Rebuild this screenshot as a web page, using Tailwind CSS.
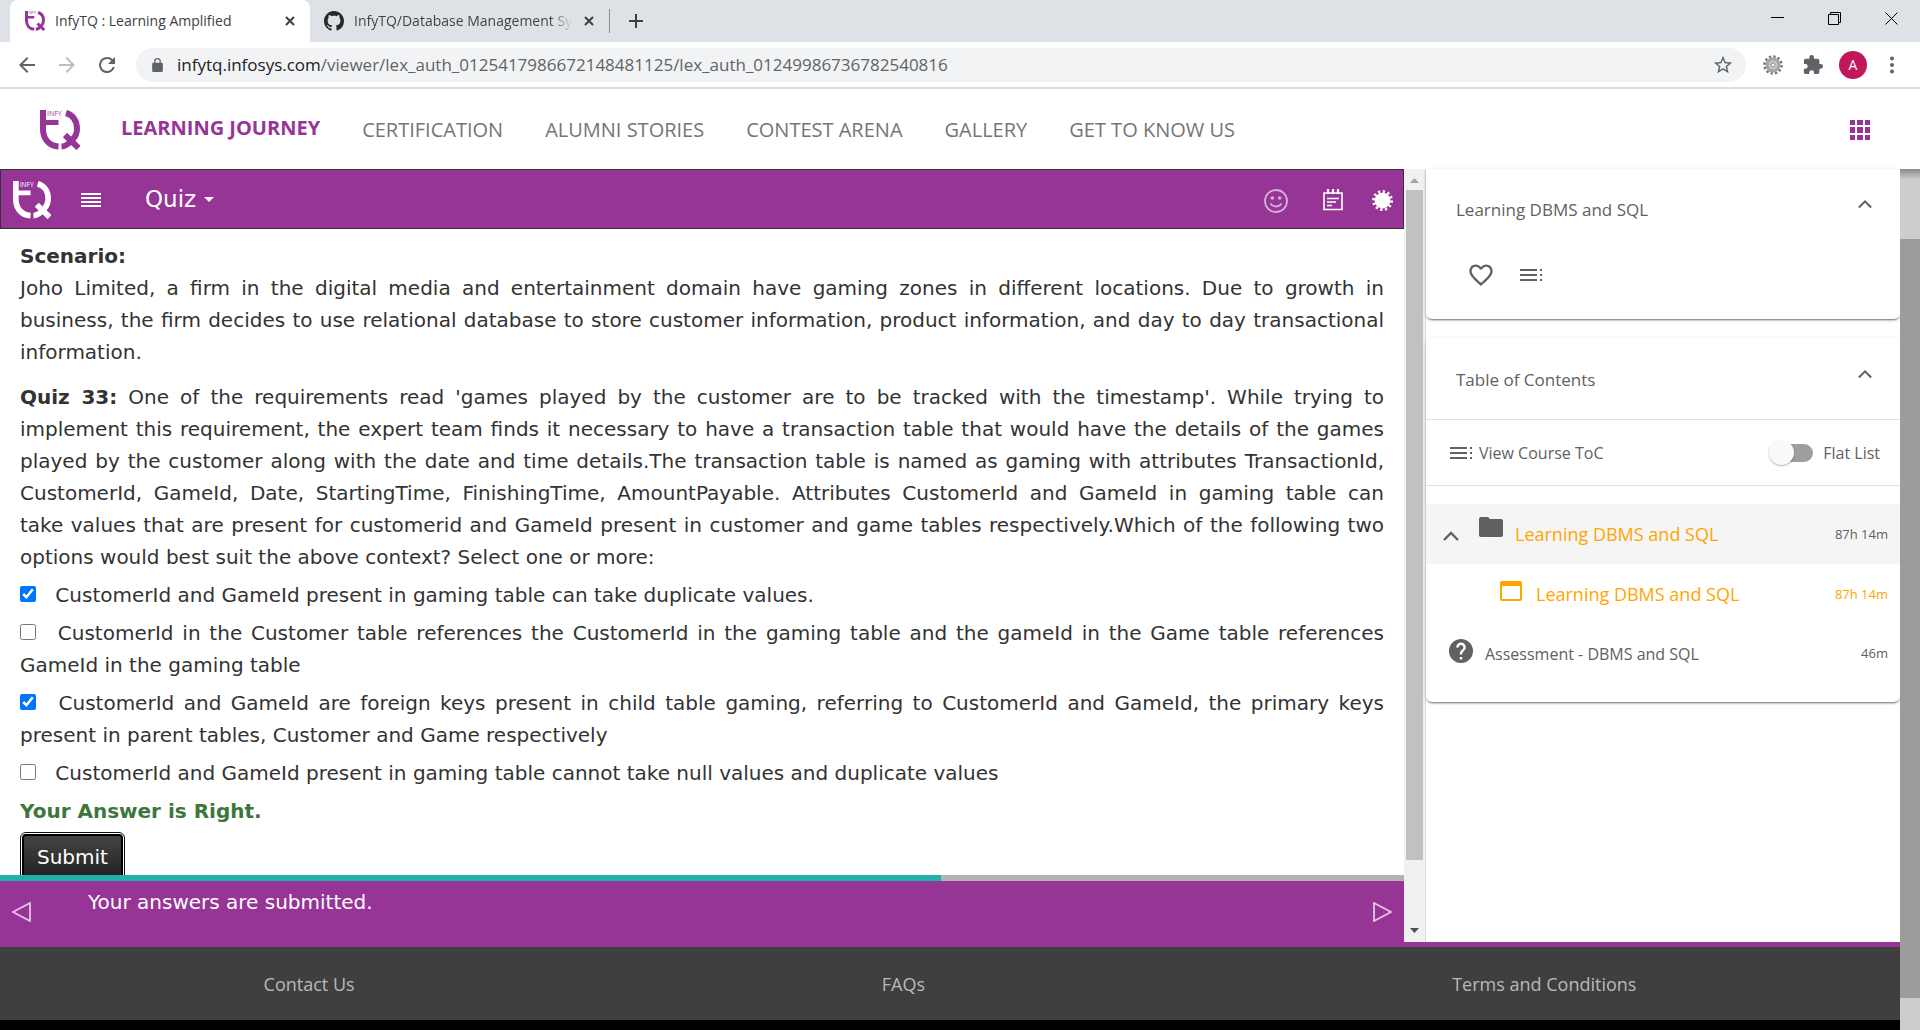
<!DOCTYPE html>
<html lang="en">
<head>
<meta charset="utf-8">
<title>InfyTQ : Learning Amplified</title>
<script src="https://cdn.jsdelivr.net/npm/@tailwindcss/browser@4"></script>
</head>
<body class="flex h-screen flex-col overflow-hidden bg-white font-['Open_Sans',sans-serif] text-[#616161]">
<svg class="hidden" aria-hidden="true">
  <symbol id="logo" viewBox="0 0 40 40">
    <g fill="none" stroke="currentColor" stroke-width="6">
      <path d="M3 0V19C3 29 9 36 18.500 36.500"/>
      <path stroke-width="5" d="M2 12.500H18.500"/>
      <path d="M26 3C33 5 37 11 37 18.500C37 23 36 26 33 29C29 34 26 36.300 21.500 36.500"/>
      <path d="M25 25L38.500 38"/>
    </g>
    <text x="7" y="6" font-size="7" fill="currentColor" font-family="Open Sans">INFY</text>
  </symbol>
  <symbol id="toc" viewBox="0 0 22 12"><path fill="currentColor" d="M0 0h17v2H0zM0 5h17v2H0zM0 10h17v2H0zM20 0h2v2h-2zM20 5h2v2h-2zM20 10h2v2h-2z"/></symbol>
  <symbol id="up" viewBox="0 0 16 10"><path fill="none" stroke="currentColor" stroke-width="2.4" d="M1 9l7-7 7 7"/></symbol>
  <symbol id="x" viewBox="0 0 10 10"><path stroke="currentColor" stroke-width="2" d="M1 1l8 8M9 1l-8 8"/></symbol>
</svg>

<!-- Browser tabs -->
<div class="flex h-[42px] shrink-0 items-stretch bg-[#dee1e6] pl-[10px] text-sm text-[#3c4043]">
  <div class="flex w-[300px] items-center rounded-t-lg bg-white pl-[15px] pr-[15px]">
    <svg class="size-5 text-[#963596]"><use href="#logo"/></svg>
    <span class="ml-[10px] flex-1 whitespace-nowrap">InfyTQ : Learning Amplified</span>
    <button aria-label="Close tab"><svg class="block size-[10px]"><use href="#x"/></svg></button>
  </div>
  <div class="flex w-[299px] items-center pl-[14px] pr-[15px]">
    <svg class="size-5 shrink-0" viewBox="0 0 16 16" fill="#24292e"><path d="M8 0C3.580 0 0 3.580 0 8c0 3.540 2.290 6.530 5.470 7.590.4.070.550-.170.550-.380 0-.190-.010-.820-.010-1.490-2.010.370-2.530-.490-2.690-.940-.090-.230-.480-.940-.820-1.130-.280-.150-.680-.520-.010-.530.630-.010 1.080.580 1.230.820.720 1.210 1.870.870 2.330.660.070-.520.280-.870.510-1.070-1.780-.200-3.640-.890-3.640-3.950 0-.870.310-1.590.820-2.150-.080-.200-.360-1.020.080-2.120 0 0 .670-.210 2.200.820.640-.180 1.320-.270 2-.270s1.360.090 2 .270c1.530-1.040 2.200-.820 2.200-.820.440 1.100.160 1.920.080 2.120.510.560.820 1.270.820 2.150 0 3.070-1.870 3.750-3.650 3.950.290.250.540.730.540 1.480 0 1.070-.010 1.930-.010 2.200 0 .210.150.460.550.380A8.010 8.010 0 0 0 16 8c0-4.420-3.580-8-8-8z"/></svg>
    <span class="ml-[10px] whitespace-nowrap bg-linear-to-r from-[#3c4043] from-90% to-transparent bg-clip-text text-transparent">InfyTQ/Database Management Sy</span>
    <button aria-label="Close tab" class="ml-auto"><svg class="block size-[10px]"><use href="#x"/></svg></button>
  </div>
  <div class="h-6 w-px self-center bg-[#8b8f94]"></div>
  <button aria-label="New tab" class="ml-[19px]"><svg class="size-[14px]" viewBox="0 0 14 14"><path stroke="currentColor" stroke-width="2" d="M7 0v14M0 7h14"/></svg></button>
  <div class="ml-auto flex items-center gap-11 pr-[22px] pb-[5px] text-black">
    <button aria-label="Minimize"><svg class="block size-[13px]" viewBox="0 0 13 13"><path stroke="currentColor" d="M0 5.500h13"/></svg></button>
    <button aria-label="Restore"><svg class="block size-[13px]" viewBox="0 0 13 13" fill="none" stroke="currentColor"><path d="M.5 2.500h10v10H.5zM2.500 2V.5h10v10H11"/></svg></button>
    <button aria-label="Close"><svg class="block size-[13px]" viewBox="0 0 13 13"><path stroke="currentColor" d="M.5.5l12 12M12.500.5l-12 12"/></svg></button>
  </div>
</div>

<!-- Address bar -->
<div class="flex h-[47px] shrink-0 items-center border-b-2 border-[#dadce0] pl-[15px] pr-4 text-[#5f6368]">
  <button aria-label="Back"><svg class="size-6" viewBox="0 0 24 24" fill="currentColor"><path d="M20 11H7.830l5.590-5.590L12 4l-8 8 8 8 1.410-1.410L7.830 13H20z"/></svg></button>
  <button aria-label="Forward" class="ml-4 text-[#bcbec1]"><svg class="size-6" viewBox="0 0 24 24" fill="currentColor"><path d="M12 4l-1.410 1.410L16.170 11H4v2h12.170l-5.580 5.590L12 20l8-8z"/></svg></button>
  <button aria-label="Reload" class="ml-4"><svg class="size-6" viewBox="0 0 24 24" fill="currentColor"><path d="M17.650 6.350A7.960 7.960 0 0 0 12 4a8 8 0 1 0 7.730 10h-2.080A6 6 0 1 1 12 6c1.660 0 3.140.690 4.220 1.780L13 11h7V4z"/></svg></button>
  <div class="ml-[17px] flex h-[34px] flex-1 items-center rounded-full bg-[#f1f3f4] pl-[14px] pr-3">
    <svg class="h-[14px] w-[15px]" viewBox="4 1 16 21" fill="currentColor"><path d="M18 8h-1V6A5 5 0 0 0 7 6v2H6a2 2 0 0 0-2 2v10c0 1.100.9 2 2 2h12a2 2 0 0 0 2-2V10a2 2 0 0 0-2-2zM8.900 6a3.100 3.100 0 0 1 6.200 0v2H8.900z"/></svg>
    <span class="ml-3 flex-1 whitespace-nowrap text-[17px]"><span class="text-[#202124]">infytq.infosys.com</span>/viewer/lex_auth_0125417986672148481125/lex_auth_01249986736782540816</span>
    <button aria-label="Bookmark"><svg class="block size-[22px]" viewBox="0 0 24 24" fill="currentColor"><path d="M22 9.240l-7.190-.620L12 2 9.190 8.630 2 9.240l5.460 4.730L5.820 21 12 17.270 18.180 21l-1.630-7.030zM12 15.400l-3.760 2.270 1-4.280-3.320-2.880 4.380-.380L12 6.100l1.710 4.040 4.380.380-3.320 2.880 1 4.280z"/></svg></button>
  </div>
  <svg class="ml-[17px] size-5" viewBox="0 0 20 20"><circle cx="10" cy="10" r="8.500" fill="none" stroke="#777" stroke-width="2.500" stroke-dasharray="2.400 2.050"/><circle cx="10" cy="10" r="6" fill="#c9c9c9" stroke="#a5a5a5" stroke-width="3"/><circle cx="10" cy="10" r="2" fill="#fff" stroke="#888"/></svg>
  <svg class="ml-5 size-5" viewBox="1 1 22 22" fill="currentColor"><path d="M20.500 11H19V7a2 2 0 0 0-2-2h-4V3.500a2.500 2.500 0 0 0-5 0V5H4a2 2 0 0 0-2 2v3.800h1.500a2.700 2.700 0 0 1 0 5.400H2V20c0 1.100.9 2 2 2h3.800v-1.500a2.700 2.700 0 0 1 5.400 0V22H17a2 2 0 0 0 2-2v-4h1.500a2.500 2.500 0 0 0 0-5z"/></svg>
  <span class="ml-4 flex size-7 items-center justify-center rounded-full bg-[#c2185b] text-sm text-white">A</span>
  <button aria-label="Menu" class="ml-[13px]"><svg class="size-6" viewBox="0 0 24 24" fill="currentColor"><circle cx="12" cy="5.500" r="2"/><circle cx="12" cy="12" r="2"/><circle cx="12" cy="18.500" r="2"/></svg></button>
</div>

<!-- Site header -->
<header class="flex h-20 shrink-0 items-center pl-10 pr-[50px] pt-[2px]">
  <svg class="size-10 text-[#963596]"><use href="#logo"/></svg>
  <nav class="ml-[41px] flex items-center gap-[42px] whitespace-nowrap text-xl text-[#757575]">
    <a href="#" class="pb-1 font-bold text-[#963596]">LEARNING JOURNEY</a>
    <a href="#">CERTIFICATION</a>
    <a href="#">ALUMNI STORIES</a>
    <a href="#">CONTEST ARENA</a>
    <a href="#">GALLERY</a>
    <a href="#">GET TO KNOW US</a>
  </nav>
  <button aria-label="Apps" class="ml-auto text-[#963596]"><svg class="block size-5" viewBox="0 0 20 20" fill="currentColor"><path d="M0 0h5v5H0zM7 0h6v5H7zM15 0h5v5h-5zM0 7h5v6H0zM7 7h6v6H7zM15 7h5v6h-5zM0 15h5v5H0zM7 15h6v5H7zM15 15h5v5h-5z"/></svg></button>
</header>

<div class="flex min-h-0 flex-1">
  <div class="flex min-w-0 flex-1 flex-col">
    <div class="flex min-h-0 flex-1">

      <!-- Quiz viewer -->
      <main class="flex min-w-0 flex-1 flex-col font-['Verdana','DejaVu_Sans',sans-serif] text-xl leading-8 text-[#333]">
        <div class="flex h-[60px] shrink-0 items-center border border-[#333] bg-[#963596] pl-3 pr-[10px] pt-[2px] text-white">
          <svg class="size-[38px]"><use href="#logo"/></svg>
          <button aria-label="Contents" class="ml-[30px]"><svg class="block h-[14px] w-5" viewBox="0 0 20 14"><path stroke="#fff" stroke-width="2" d="M0 1h20M0 5h20M0 9h20M0 13h20"/></svg></button>
          <button class="ml-11 flex items-center gap-2 pb-[2px] text-[23px]">Quiz <svg class="h-[5px] w-[10px]" viewBox="0 0 10 5"><path fill="#fff" d="M0 0h10L5 5z"/></svg></button>
          <button aria-label="Feedback" class="ml-auto pt-[2px] opacity-60"><svg class="block size-6" viewBox="0 0 24 24" fill="none" stroke="#fff" stroke-width="1.800"><circle cx="12" cy="12" r="11"/><path d="M6.500 14.500c2.500 4 8.500 4 11 0"/><circle cx="8.300" cy="9" r=".9" fill="#fff"/><circle cx="15.700" cy="9" r=".9" fill="#fff"/></svg></button>
          <button aria-label="Notes" class="ml-[34px]"><svg class="block size-[22px]" viewBox="0 0 22 22" fill="none" stroke="#fff"><path stroke-width="1.600" d="M2 4h18v16.500H2z"/><path stroke-width="2.200" d="M6 0v5M11 0v5M16 0v5"/><path stroke-width="1.300" d="M5 9.500h12M5 13h9M5 16.500h5"/></svg></button>
          <button aria-label="Settings" class="ml-7"><svg class="block size-[21px]" viewBox="0 0 20 20"><circle cx="10" cy="10" r="7.500" fill="#fff"/><circle cx="10" cy="10" r="8.600" fill="none" stroke="#fff" stroke-width="2.800" stroke-dasharray="2.100 2.400"/></svg></button>
        </div>

        <div class="min-h-0 flex-1 overflow-hidden px-5 pt-[11px] text-justify">
          <p><b>Scenario:</b><br>Joho Limited, a firm in the digital media and entertainment domain have gaming zones in different locations. Due to growth in business, the firm decides to use relational database to store customer information, product information, and day to day transactional information.</p>
          <p class="mt-[13px]"><b>Quiz 33:</b> One of the requirements read 'games played by the customer are to be tracked with the timestamp'. While trying to implement this requirement, the expert team finds it necessary to have a transaction table that would have the details of the games played by the customer along with the date and time details.The transaction table is named as gaming with attributes TransactionId, CustomerId, GameId, Date, StartingTime, FinishingTime, AmountPayable. Attributes CustomerId and GameId in gaming table can take&nbsp;values that are present for customerid and GameId present in customer and game tables respectively.Which of the following two options would best suit the above context? Select one or more:</p>
          <label class="mt-[6px] block"><input type="checkbox" checked class="mr-[13px] size-4 accent-[#0075ff]"> CustomerId and GameId present in gaming table can take duplicate values.</label>
          <label class="mt-[6px] block"><input type="checkbox" class="mr-[13px] size-4 accent-[#0075ff]"> CustomerId in the Customer table references the CustomerId in the gaming table and the gameId in the Game table references GameId in the gaming table</label>
          <label class="mt-[6px] block"><input type="checkbox" checked class="mr-[13px] size-4 accent-[#0075ff]"> CustomerId and GameId are foreign keys present in child table gaming, referring to CustomerId and GameId, the primary keys present in parent tables, Customer and Game respectively</label>
          <label class="mt-[6px] block"><input type="checkbox" class="mr-[13px] size-4 accent-[#0075ff]"> CustomerId and GameId present in gaming table cannot take null values and duplicate values</label>
          <p class="mt-[6px] font-bold text-[#3c763d]">Your Answer is Right.</p>
          <button class="mt-[7px] ml-[2px] h-[46px] rounded-sm border-2 border-black bg-linear-to-b from-[#444] to-[#222] px-[13px] text-white outline-1 outline-offset-1 outline-[#101010]">Submit</button>
        </div>

        <div class="flex h-[6px] shrink-0 bg-[#b3b3b3]"><div class="w-[67%] bg-[#20b2aa]"></div></div>
        <div class="flex h-[61px] shrink-0 items-center bg-[#963596] px-3 text-white">
          <button aria-label="Previous"><svg class="block h-5 w-[19px]" viewBox="0 0 19 20"><path fill="none" stroke="#e3c6e3" stroke-width="1.800" d="M18 1v18L1 10z"/></svg></button>
          <span class="ml-[57px] pb-5">Your answers are submitted.</span>
          <button aria-label="Next" class="ml-auto"><svg class="block h-5 w-[19px]" viewBox="0 0 19 20"><path fill="none" stroke="#e3c6e3" stroke-width="1.800" d="M1 1v18l17-9z"/></svg></button>
        </div>
      </main>

      <!-- Viewer scrollbar -->
      <div class="flex w-[22px] flex-col items-center border-r border-[#ddd] bg-[#f1f1f1]">
        <svg class="h-[21px] w-[9px] shrink-0" viewBox="0 0 9 21"><path fill="#a3a3a3" d="M0 14h9L4.500 9z"/></svg>
        <div class="w-[17px] flex-[67] bg-[#c1c1c1]"></div>
        <div class="flex-[6]"></div>
        <svg class="h-[22px] w-[9px] shrink-0" viewBox="0 0 9 22"><path fill="#505050" d="M0 8h9l-4.500 5z"/></svg>
      </div>

      <!-- Sidebar -->
      <aside class="flex w-[474px] flex-col gap-[19px] text-[17px]">
        <section class="h-[150px] rounded-b-md pl-[30px] pr-7 shadow-[0_2px_2px_-1px_rgba(0,0,0,0.5),0_1px_4px_rgba(0,0,0,0.15)]">
          <div class="flex h-20 items-center justify-between pt-[2px]">
            <h2>Learning DBMS and SQL</h2>
            <button aria-label="Collapse" class="pb-3"><svg class="block h-[10px] w-[14px]"><use href="#up"/></svg></button>
          </div>
          <div class="flex items-center gap-[25px] pl-[11px] pt-3">
            <button aria-label="Like"><svg class="block size-7" viewBox="0 0 24 24" fill="currentColor"><path d="M16.500 3c-1.740 0-3.410.810-4.500 2.090C10.910 3.810 9.240 3 7.500 3 4.420 3 2 5.420 2 8.500c0 3.780 3.400 6.860 8.550 11.540L12 21.350l1.450-1.320C18.600 15.360 22 12.280 22 8.500 22 5.420 19.580 3 16.500 3zm-4.400 15.550l-.1.100-.1-.1C7.140 14.240 4 11.390 4 8.500 4 6.500 5.500 5 7.500 5c1.540 0 3.040.990 3.570 2.360h1.870C13.460 5.990 14.960 5 16.500 5c2 0 3.500 1.500 3.500 3.500 0 2.890-3.140 5.740-7.900 10.050z"/></svg></button>
            <button aria-label="Contents list"><svg class="block h-3 w-[22px]"><use href="#toc"/></svg></button>
          </div>
        </section>

        <section class="rounded-md pb-[18px] shadow-[0_2px_2px_-1px_rgba(0,0,0,0.5),0_1px_4px_rgba(0,0,0,0.15)]">
          <div class="flex h-[82px] items-center justify-between border-b border-[#e0e0e0] pl-[30px] pr-7 pt-[2px]">
            <h2>Table of Contents</h2>
            <button aria-label="Collapse" class="pb-3"><svg class="block h-[10px] w-[14px]"><use href="#up"/></svg></button>
          </div>
          <div class="flex h-[66px] items-center border-b border-[#e0e0e0] pl-6 pr-5 text-base">
            <a href="#" class="flex items-center gap-[7px]"><svg class="h-3 w-[22px]"><use href="#toc"/></svg>View Course ToC</a>
            <label class="ml-auto flex items-center gap-[10px]">
              <input type="checkbox" role="switch" class="peer sr-only">
              <span class="flex h-[18px] w-11 items-center rounded-full bg-linear-to-r from-transparent from-30% to-[#9e9e9e] to-30%"><span class="size-[25px] rounded-full bg-[#fafafa] shadow-[0_1px_2px_rgba(0,0,0,0.3)]"></span></span>
              Flat List
            </label>
          </div>
          <ul class="pt-[18px]">
            <li class="flex h-[60px] items-center bg-[#f5f5f5] pl-[17px] pr-3 text-lg">
              <button aria-label="Toggle folder" class="pt-1"><svg class="block h-[10px] w-4"><use href="#up"/></svg></button>
              <svg class="ml-5 mb-[14px] h-5 w-6" viewBox="0 0 24 20" fill="currentColor"><path d="M9 0H2a2 2 0 0 0-2 2v16c0 1.100.9 2 2 2h20a2 2 0 0 0 2-2V4a2 2 0 0 0-2-2H11z"/></svg>
              <a href="#" class="ml-3 text-[#ffa500]">Learning DBMS and SQL</a>
              <span class="ml-auto text-[13px]">87h 14m</span>
            </li>
            <li class="flex h-[60px] items-center pl-[74px] pr-3 text-lg text-[#ffa500]">
              <svg class="mb-[6px] h-5 w-[22px]" viewBox="0 0 22 20"><path fill="currentColor" fill-rule="evenodd" d="M2 0h18a2 2 0 0 1 2 2v16a2 2 0 0 1-2 2H2a2 2 0 0 1-2-2V2a2 2 0 0 1 2-2zm0 5v13h18V5z"/></svg>
              <a href="#" class="ml-[14px]">Learning DBMS and SQL</a>
              <span class="ml-auto text-[13px]">87h 14m</span>
            </li>
            <li class="flex h-[60px] items-center pl-[23px] pr-3 text-base">
              <svg class="mb-[6px] size-6" viewBox="2 2 20 20" fill="currentColor"><path d="M12 2a10 10 0 1 0 0 20 10 10 0 0 0 0-20zm1 17h-2v-2h2zm2.070-7.750l-.9.920C13.450 12.900 13 13.500 13 15h-2v-.5c0-1.100.450-2.100 1.170-2.830l1.240-1.260c.370-.360.590-.860.590-1.410a2 2 0 0 0-4 0H8a4 4 0 0 1 8 0c0 .880-.360 1.680-.930 2.250z"/></svg>
              <a href="#" class="ml-3">Assessment - DBMS and SQL</a>
              <span class="ml-auto text-[13px]">46m</span>
            </li>
          </ul>
        </section>
      </aside>
    </div>

    <footer class="shrink-0 border-t-5 border-[#963596]">
      <div class="flex h-[73px] items-center justify-around bg-[#3f3f3f] text-lg text-[#b9b9b9]">
        <a href="#">Contact Us</a>
        <a href="#">FAQs</a>
        <a href="#">Terms and Conditions</a>
      </div>
      <div class="h-[10px] bg-black"></div>
    </footer>
  </div>

  <!-- Page scrollbar -->
  <div class="flex w-5 flex-col bg-[#cdcdcd]">
    <div class="h-[70px] bg-linear-to-b from-[#8a8a8a] to-[#cdcdcd] to-15%"></div>
    <div class="flex-1 bg-[#9c9c9c]"></div>
    <div class="h-8"></div>
  </div>
</div>
</body>
</html>
